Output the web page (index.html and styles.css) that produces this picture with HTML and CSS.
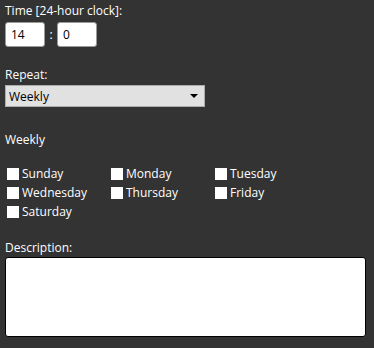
FILE: index.html
```html
<!DOCTYPE html>
<html lang="en">
<head>
  <meta charset="UTF-8" />
  <title>Schedule</title>
  <link rel="stylesheet" href="styles.css">
</head>
<body>
<form class="schedule-form">
  <!-- Time -->
  <label class="field-label" for="hour-input">Time [24-hour clock]:</label>
  <div class="time-row">
    <input id="hour-input" class="time-input" value="14" />
    <span class="time-sep">:</span>
    <input id="minute-input" class="time-input" value="0" />
  </div>

  <!-- Repeat -->
  <label class="field-label repeat-label" for="repeat-select">Repeat:</label>
  <div class="select-box">
    <span id="repeat-select">Weekly</span>
    <span class="select-arrow"></span>
  </div>

  <!-- Weekdays -->
  <div class="section-title">Weekly</div>
  <div class="day-grid">
    <label class="day"><span class="check"></span>Sunday</label>
    <label class="day"><span class="check"></span>Monday</label>
    <label class="day"><span class="check"></span>Tuesday</label>
    <label class="day"><span class="check"></span>Wednesday</label>
    <label class="day"><span class="check"></span>Thursday</label>
    <label class="day"><span class="check"></span>Friday</label>
    <label class="day"><span class="check"></span>Saturday</label>
  </div>

  <!-- Description -->
  <label class="field-label desc-label" for="desc-input">Description:</label>
  <textarea id="desc-input" class="desc-input"></textarea>
</form>
</body>
</html>
```

FILE: styles.css
```css
body {
  margin: 0;
  background-color: #333333;
  color: #ffffff;
  font-family: "Open Sans", "Noto Sans", sans-serif;
  font-size: 12px;
}

.schedule-form {
  display: flex;
  flex-direction: column;
  align-items: flex-start;
  padding: 2px 5px;
}

.field-label {
  line-height: 17px;
}

.time-row {
  display: flex;
  align-items: center;
  margin-top: 3px;
}

.time-input {
  box-sizing: border-box;
  width: 40px;
  height: 25px;
  border: 1px solid #9a9a9a;
  border-radius: 3px;
  padding: 0 5px;
  font-family: inherit;
  font-size: 12px;
  color: #000000;
  background: #ffffff;
}

.time-sep {
  width: 12px;
  text-align: center;
}

.repeat-label {
  margin-top: 19px;
}

.select-box {
  box-sizing: border-box;
  width: 200px;
  height: 22px;
  margin-top: 2px;
  display: flex;
  align-items: center;
  justify-content: space-between;
  padding: 0 6px 0 3px;
  background-color: #e1e1e1;
  border: 1px solid #adadad;
  color: #000000;
}

.select-arrow {
  width: 0;
  height: 0;
  border-left: 4px solid transparent;
  border-right: 4px solid transparent;
  border-top: 4px solid #000000;
}

.section-title {
  margin-top: 24px;
  line-height: 17px;
}

.day-grid {
  display: grid;
  grid-template-columns: 104px 104px 104px;
  grid-auto-rows: 19px;
  margin-top: 16px;
  padding-left: 2px;
}

.day {
  display: flex;
  align-items: center;
  gap: 3px;
}

.check {
  width: 12px;
  height: 12px;
  background: #ffffff;
}

.desc-label {
  margin-top: 18px;
}

.desc-input {
  box-sizing: border-box;
  width: 361px;
  height: 80px;
  margin-top: 1px;
  border: 1px solid #000000;
  border-radius: 3px;
  background: #ffffff;
  resize: none;
}
```
